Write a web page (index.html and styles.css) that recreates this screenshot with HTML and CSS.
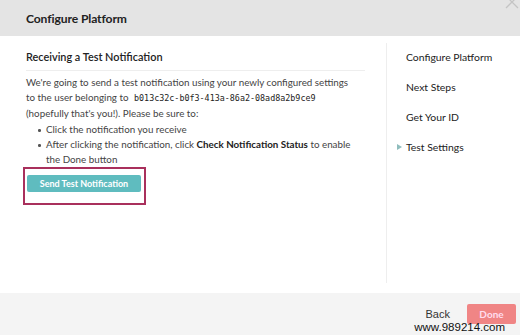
FILE: index.html
```html
<!DOCTYPE html>
<html lang="en">
<head>
  <meta charset="utf-8" />
  <meta name="viewport" content="width=device-width, initial-scale=1" />
  <title>Configure Platform</title>
  <link rel="stylesheet" href="styles.css">
</head>
<body>
  <div class="modal">
    <header class="modal-head">
      <h1>Configure Platform</h1>
      <span class="close">
        <svg width="16" height="16" viewBox="0 0 16 16"><path d="M2 -4 L14 8 M14 -4 L2 8" stroke="#c4c4c4" stroke-width="1.3" fill="none"/></svg>
      </span>
    </header>

    <div class="modal-body">
      <section class="main">
        <h2>Receiving a Test Notification</h2>
        <p>We're going to send a test notification using your newly configured settings to the user belonging to <code>b013c32c-b0f3-413a-86a2-08ad8a2b9ce9</code> (hopefully that's you!). Please be sure to:</p>
        <ul class="steps">
          <li>Click the notification you receive</li>
          <li>After clicking the notification, click <b>Check Notification Status</b> to enable the Done button</li>
        </ul>
        <div class="highlight">
          <button class="btn btn-teal" type="button">Send Test Notification</button>
        </div>
      </section>

      <nav class="side">
        <a href="#">Configure Platform</a>
        <a href="#">Next Steps</a>
        <a href="#">Get Your ID</a>
        <a href="#" class="current">Test Settings</a>
      </nav>
    </div>

    <footer class="modal-foot">
      <a href="#" class="back">Back</a>
      <button class="btn btn-done" type="button">Done</button>
      <span class="mark">www.989214.com</span>
    </footer>
  </div>
</body>
</html>
```

FILE: styles.css
```css
body{margin:0;font-family:Lato, "Open Sans", sans-serif;color:#333;background:#fff}
.modal{width:520px;height:335px;display:flex;flex-direction:column;position:relative;overflow:hidden}

.modal-head{height:36px;background:#e4e4e4;display:flex;align-items:center;padding-left:26px;position:relative}
.modal-head h1{margin:0;font-family:Lato, sans-serif;font-size:12.1px;font-weight:700;color:#222;letter-spacing:-.1px}
.close{position:absolute;right:0;top:0;width:16px;height:10px}

.modal-body{flex:1;display:flex;background:#fff}
.main{width:339px;padding:0 21px 0 26px}
.main h2{margin:0;padding:14px 0 7px;font-size:10.9px;font-weight:600;color:#222;border-bottom:1px solid #eee}
.main p{margin:4px 0 0;max-width:328px;font-size:9.8px;line-height:15px;color:#444}
.main code{font-family:"DejaVu Sans Mono", monospace;font-size:8.4px;color:#222;padding:0 3px}
.steps{margin:1px 0 0;padding-left:20px;max-width:308px;list-style:none;font-size:9.8px;line-height:15px;color:#444}
.steps li{position:relative}
.steps li::before{content:"";position:absolute;left:-8px;top:7px;width:2.5px;height:2.5px;border-radius:50%;background:#555}
.steps b{color:#222;font-weight:700}

.highlight{display:inline-block;margin:0 0 0 -3px;padding:5.5px 3px 11.5px 2px;border:2.5px solid #a9305c}
.btn{border:0;font-family:Lato, sans-serif;cursor:pointer}
.btn-teal{display:block;width:114px;height:17px;background:#5fbcbf;color:#fff;font-size:9px;font-weight:700;border-radius:2px;padding:0}

.side{flex:1;display:flex;flex-direction:column;margin:7px 0 10px;border-left:1px solid #eee;padding:6px 0 0 19px}
.side a{height:30px;line-height:16px;font-size:10.4px;color:#222;text-decoration:none;position:relative}
.side a.current::before{content:"";position:absolute;left:-9px;top:5px;border-left:5px solid #8fbdbd;border-top:3px solid transparent;border-bottom:3px solid transparent}

.modal-foot{height:42px;background:#f4f4f4;display:flex;align-items:center;justify-content:flex-end;padding-right:4px;gap:17px;position:relative}
.back{font-family:"Liberation Sans", sans-serif;font-size:11px;color:#333;text-decoration:none}
.btn-done{width:49px;height:20px;background:#f08585;color:#fde;font-size:10px;font-weight:700;border-radius:2px}
.mark{position:absolute;right:15px;bottom:2px;font-family:"Liberation Sans", sans-serif;font-size:11.5px;color:#111}
```
